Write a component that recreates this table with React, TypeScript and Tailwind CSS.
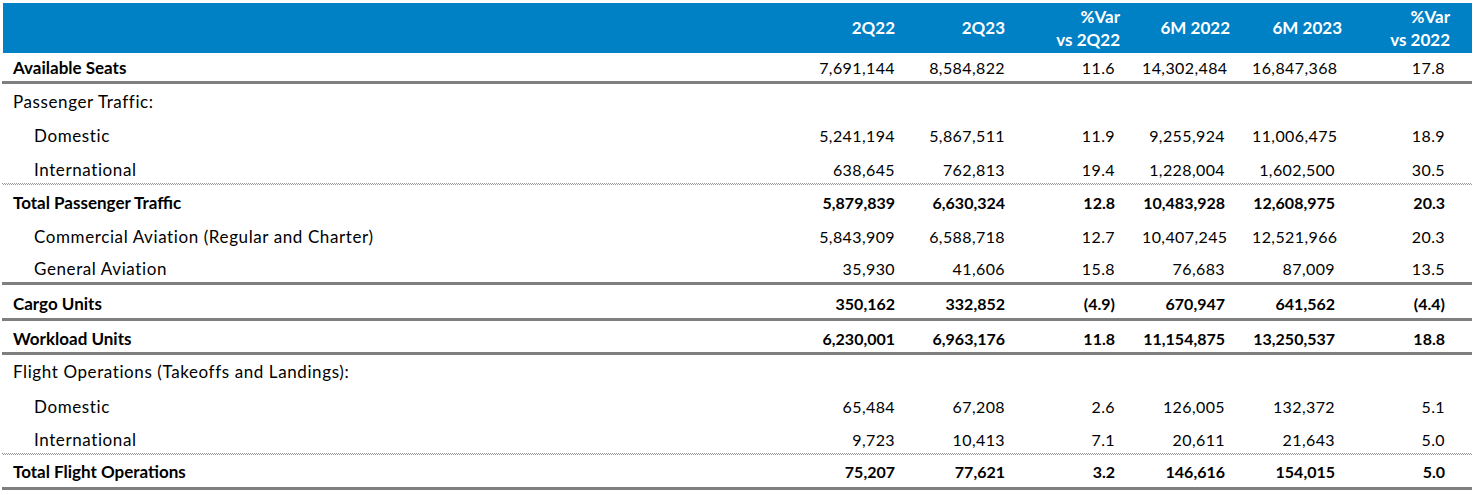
type Row = {
  label: string;
  values: string[];
  bold?: boolean;
  boldValues?: boolean;
  indent?: boolean;
  h: string;
  pt: string;
  line?: 'thick' | 'dotted';
};

const ROWS: Row[] = [
  { label: 'Available Seats', values: ['7,691,144', '8,584,822', '11.6', '14,302,484', '16,847,368', '17.8'], bold: true, h: 'h-[28px]', pt: 'pt-[5px]', line: 'thick' },
  { label: 'Passenger Traffic:', values: [], h: 'h-[34px]', pt: 'pt-[8px]' },
  { label: 'Domestic', values: ['5,241,194', '5,867,511', '11.9', '9,255,924', '11,006,475', '18.9'], indent: true, h: 'h-[34px]', pt: 'pt-[8px]' },
  { label: 'International', values: ['638,645', '762,813', '19.4', '1,228,004', '1,602,500', '30.5'], indent: true, h: 'h-[31px]', pt: 'pt-[8px]', line: 'dotted' },
  { label: 'Total Passenger Traffic', values: ['5,879,839', '6,630,324', '12.8', '10,483,928', '12,608,975', '20.3'], bold: true, boldValues: true, h: 'h-[34px]', pt: 'pt-[8px]' },
  { label: 'Commercial Aviation (Regular and Charter)', values: ['5,843,909', '6,588,718', '12.7', '10,407,245', '12,521,966', '20.3'], indent: true, h: 'h-[34px]', pt: 'pt-[8px]' },
  { label: 'General Aviation', values: ['35,930', '41,606', '15.8', '76,683', '87,009', '13.5'], indent: true, h: 'h-[29px]', pt: 'pt-[6px]', line: 'thick' },
  { label: 'Cargo Units', values: ['350,162', '332,852', '(4.9)', '670,947', '641,562', '(4.4)'], bold: true, boldValues: true, h: 'h-[33px]', pt: 'pt-[9px]', line: 'thick' },
  { label: 'Workload Units', values: ['6,230,001', '6,963,176', '11.8', '11,154,875', '13,250,537', '18.8'], bold: true, boldValues: true, h: 'h-[31px]', pt: 'pt-[8px]', line: 'thick' },
  { label: 'Flight Operations (Takeoffs and Landings):', values: [], h: 'h-[34px]', pt: 'pt-[7px]' },
  { label: 'Domestic', values: ['65,484', '67,208', '2.6', '126,005', '132,372', '5.1'], indent: true, h: 'h-[34px]', pt: 'pt-[8px]' },
  { label: 'International', values: ['9,723', '10,413', '7.1', '20,611', '21,643', '5.0'], indent: true, h: 'h-[30px]', pt: 'pt-[7px]', line: 'dotted' },
  { label: 'Total Flight Operations', values: ['75,207', '77,621', '3.2', '146,616', '154,015', '5.0'], bold: true, boldValues: true, h: 'h-[32px]', pt: 'pt-[7px]', line: 'thick' },
];

const GRID = 'grid grid-cols-[1fr_110px_110px_110px_110px_110px_110px]';

const Divider = ({ kind }: { kind: 'thick' | 'dotted' }) => {
  if (kind === 'thick') {
    return <div className="h-[3px] bg-[#7f7f7f]" />;
  }
  // fine checkered rule, two pixel rows out of phase
  return (
    <div>
      <div className="h-px bg-[repeating-linear-gradient(90deg,#9a9a9a_0px,#9a9a9a_1px,transparent_1px,transparent_2px)]" />
      <div className="h-px bg-[repeating-linear-gradient(90deg,transparent_0px,transparent_1px,#9a9a9a_1px,#9a9a9a_2px)]" />
    </div>
  );
};

export default function App() {
  return (
    <div className="min-h-screen bg-white pt-[3px] pl-[2px] pr-[7px] font-['Lato',sans-serif] leading-[20px] text-black">
      <div className={`${GRID} ml-px h-[50px] bg-[#0080c5] text-[17px] font-bold text-white`}>
        <div />
        <div className="self-center pr-[27px] text-right">2Q22</div>
        <div className="self-center pr-[27px] text-right">2Q23</div>
        <div className="self-center pr-[22px] text-right leading-[23px]">
          %Var
          <br />
          vs 2Q22
        </div>
        <div className="self-center pr-[22px] text-right">6M 2022</div>
        <div className="self-center pr-[20px] text-right">6M 2023</div>
        <div className="self-center pr-[22px] text-right leading-[23px]">
          %Var
          <br />
          vs 2022
        </div>
      </div>

      {ROWS.map((row, i) => (
        <div key={i}>
          <div className={`${GRID} ${row.h} ${row.pt}`}>
            <div
              className={`text-[17px] ${row.indent ? 'pl-[32px]' : 'pl-[11px]'} ${
                row.bold ? 'font-bold' : 'tracking-[0.6px]'
              }`}
            >
              {row.label}
            </div>
            {row.values.map((v, j) => (
              <div
                key={j}
                className={`pr-[27px] text-right text-[16px] ${row.boldValues ? 'font-bold' : 'tracking-[0.4px]'}`}
              >
                {v}
              </div>
            ))}
          </div>
          {row.line && <Divider kind={row.line} />}
        </div>
      ))}
    </div>
  );
}
